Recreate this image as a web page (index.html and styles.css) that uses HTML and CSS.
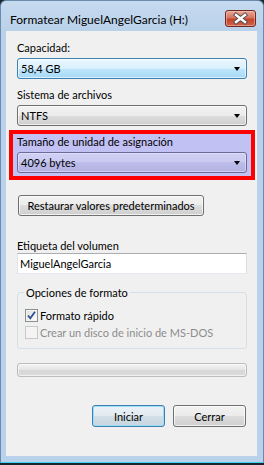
FILE: index.html
```html
<!DOCTYPE html>
<html lang="es">
<head>
<meta charset="utf-8">
<title>Formatear</title>
<link rel="stylesheet" href="styles.css">
</head>
<body>
<div class="window">
  <div class="titlebar">
    <span class="title">Formatear MiguelAngelGarcia (H:)</span>
    <div class="close">
      <svg width="31" height="17" viewBox="0 0 31 17">
        <path d="M11 5 L20 12 M20 5 L11 12" stroke="#4a4a4a" stroke-width="4.2" stroke-linecap="square" fill="none"/>
        <path d="M11 5 L20 12 M20 5 L11 12" stroke="#ffffff" stroke-width="2.4" stroke-linecap="square" fill="none"/>
      </svg>
    </div>
  </div>
  <div class="content">
    <div class="label label-first">Capacidad:</div>
    <div class="combo combo-hot"><span>58,4 GB</span><i class="arrow"></i></div>

    <div class="label">Sistema de archivos</div>
    <div class="combo"><span>NTFS</span><i class="arrow"></i></div>

    <div class="highlight">
      <div class="label label-in">Tamaño de unidad de asignación</div>
      <div class="combo combo-tint"><span>4096 bytes</span><i class="arrow"></i></div>
    </div>

    <div class="btn btn-restore">Restaurar valores predeterminados</div>

    <div class="label label-vol">Etiqueta del volumen</div>
    <div class="textbox">MiguelAngelGarcia</div>

    <fieldset class="group">
      <legend>Opciones de formato</legend>
      <div class="check">
        <span class="box">
          <svg width="11" height="11" viewBox="0 0 11 11"><path d="M2 5.5 L4.3 8.3 L9 1.8" stroke="#2e4f8f" stroke-width="1.8" fill="none"/></svg>
        </span>
        <span>Formato rápido</span>
      </div>
      <div class="check check-disabled">
        <span class="box"></span>
        <span>Crear un disco de inicio de MS-DOS</span>
      </div>
    </fieldset>

    <div class="progress"></div>

    <div class="actions">
      <div class="btn btn-default">Iniciar</div>
      <div class="btn btn-close">Cerrar</div>
    </div>
  </div>
</div>
</body>
</html>
```

FILE: styles.css
```css
* { box-sizing: border-box; }
html, body { margin: 0; padding: 0; }
body {
  width: 264px;
  height: 465px;
  overflow: hidden;
  background: #1a262e;
  font-family: Lato, "Noto Sans", sans-serif;
  font-size: 11px;
  color: #000;
}
.window {
  width: 264px;
  height: 463px;
  background: linear-gradient(#c6daef, #b9d1ea 30px, #b9d1ea);
  border: 1px solid #6a8bad;
  border-bottom: 1px solid #3fd0f2;
  border-radius: 6px 6px 0 0;
  padding: 0 6px 6px 5px;
  display: flex;
  flex-direction: column;
}
.titlebar {
  height: 30px;
  display: flex;
  align-items: flex-start;
}
.title {
  margin: 11px 0 0 4px;
  line-height: 15px;
  font-size: 12px;
}
.close {
  margin: 9px 1px 0 auto;
  width: 31px;
  height: 17px;
  border: 1px solid #6e2a20;
  border-radius: 3px;
  background: linear-gradient(#e9a99a, #d7735f 45%, #c4432b 55%, #d0624a);
  box-shadow: inset 0 0 0 1px rgba(255, 200, 190, 0.5);
  display: flex;
  align-items: center;
  justify-content: center;
}
.close svg { display: block; margin: -1px; }

.content {
  height: 425px;
  background: #f0f0f0;
  padding: 9px 10px 0 11px;
  display: flex;
  flex-direction: column;
}
.label {
  line-height: 15px;
  margin-top: 8px;
  margin-bottom: 3px;
}
.label-first { margin-top: 0; }
.label-in { margin-top: 0; }
.label-vol { margin-top: 22px; margin-bottom: 0; }

.combo {
  height: 21px;
  border: 1px solid #707070;
  border-radius: 3px;
  background: linear-gradient(#f2f2f2, #ebebeb 50%, #dddddd 50%, #cfcfcf);
  display: flex;
  align-items: center;
  padding: 0 6px 0 3px;
  box-shadow: inset 0 0 0 1px rgba(255,255,255,0.6);
}
.combo span { flex: 1; line-height: 15px; }
.combo-hot {
  border-color: #3c7fb1;
  background: linear-gradient(#eaf6fd, #d9f0fc 50%, #bee6fd 50%, #a7d9f5);
}
.combo-tint {
  border-color: #6b6b9a;
  background: linear-gradient(#d0d0f4, #cacaf1 50%, #bdbdea 50%, #b2b2e2);
  box-shadow: inset 0 0 0 1px rgba(235,235,255,0.5);
}
.arrow {
  width: 0;
  height: 0;
  border-left: 3.5px solid transparent;
  border-right: 3.5px solid transparent;
  border-top: 4px solid #000;
}

.highlight {
  margin: 4px -8px 0;
  border: 4px solid #ff0000;
  background: #c1c1f3;
  padding: 0 4px 3px;
}

.btn {
  height: 21px;
  border: 1px solid #707070;
  border-radius: 3px;
  background: linear-gradient(#f2f2f2, #ebebeb 50%, #dddddd 50%, #cfcfcf);
  box-shadow: inset 0 0 0 1px rgba(255,255,255,0.7);
  display: flex;
  align-items: center;
  justify-content: center;
  line-height: 15px;
}
.btn-restore {
  margin: 15px 0 0 1px;
  width: 186px;
  align-self: flex-start;
}

.textbox {
  height: 21px;
  background: #fff;
  border: 1px solid #e3e9ef;
  border-top-color: #abadb3;
  border-left-color: #e2e3ea;
  border-right-color: #dbdfe6;
  padding: 0 2px;
  display: flex;
  align-items: center;
  line-height: 15px;
}

.group {
  margin: 11px 0 0;
  padding: 7px 0 7px 7px;
  border: 1px solid #d5dfe5;
  border-radius: 3px;
  min-width: 0;
}
.group legend {
  margin-left: -1px;
  padding: 0 2px;
  line-height: 15px;
}
.check {
  height: 17px;
  display: flex;
  align-items: center;
  gap: 2px;
  line-height: 15px;
}
.box {
  width: 13px;
  height: 13px;
  border: 1px solid #8e8f8f;
  background: linear-gradient(135deg, #dcdcdc, #ffffff);
  box-shadow: inset 0 0 0 1px #f4f4f4;
  display: flex;
  align-items: center;
  justify-content: center;
}
.check-disabled { color: #8d8d8d; }
.check-disabled .box {
  border-color: #c8c8c8;
  background: #f4f4f4;
  box-shadow: none;
}

.progress {
  margin-top: 14px;
  height: 14px;
  border: 1px solid #bcbcbc;
  border-radius: 3px;
  background: linear-gradient(#f3f3f3, #e6e6e6 45%, #d6d6d6 55%, #dcdcdc);
  box-shadow: inset 0 0 0 1px rgba(255,255,255,0.6);
}

.actions {
  margin-top: 28px;
  display: flex;
  justify-content: flex-end;
  gap: 8px;
  padding-right: 1px;
}
.actions .btn {
  height: 22px;
  width: 73px;
}
.btn-default {
  border-color: #3c7fb1;
  box-shadow: inset 0 0 0 1px #9fdcf8;
  background: linear-gradient(#eaf2f7, #e2ebf1 50%, #d3dfe7 50%, #c6d5df);
}
```
